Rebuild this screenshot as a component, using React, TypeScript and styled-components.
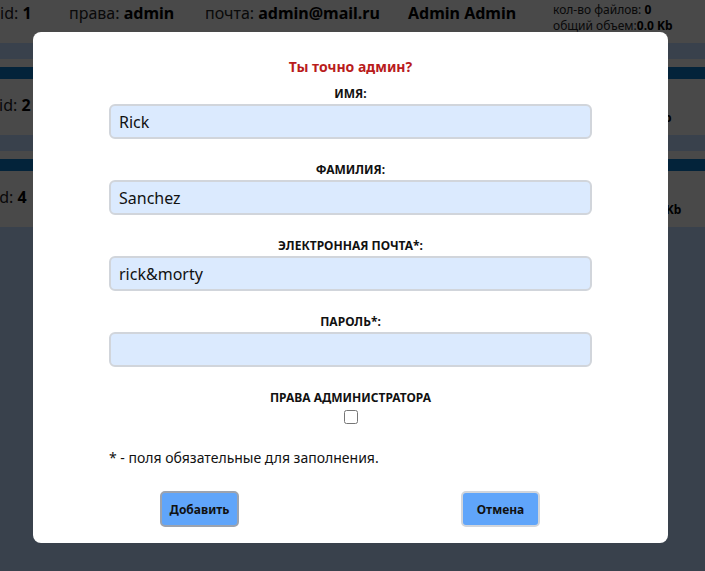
import React from "react";
import styled, { createGlobalStyle } from "styled-components";

const GlobalStyle = createGlobalStyle`
  html, body {
    margin: 0;
    padding: 0;
    height: 100%;
    overflow: hidden;
  }

  body {
    font-family: "Noto Sans", "Open Sans", sans-serif;
    background: #bfdbfe;
    color: #111;
  }
`;

const Page = styled.div`
  position: relative;
  height: 571px;
  background: #bfdbfe;
  overflow: hidden;
`;

const UserList = styled.div`
  display: flex;
  flex-direction: column;
  gap: 16px;
  margin-top: -33px;
`;

const UserCard = styled.div`
  display: flex;
  flex-direction: column;
  height: 76px;
  padding-top: 8px;
  box-sizing: border-box;
  background: #f3f4f6;
`;

const Stripe = styled.div`
  height: 12px;
  background: #0d75c1;
`;

const UserRow = styled.div<{ $shift: number }>`
  flex: 1;
  display: flex;
  align-items: center;
  margin-left: ${(p) => p.$shift}px;
  font-size: 16px;
  color: #222;

  b {
    color: #000;
  }
`;

const Cell = styled.div<{ $w: number }>`
  width: ${(p) => p.$w}px;
  flex-shrink: 0;
  white-space: nowrap;
  margin-top: -4px;
`;

const Stats = styled.div`
  display: flex;
  flex-direction: column;
  font-size: 12px;
  line-height: 16px;
  white-space: nowrap;
  margin-top: 6px;
`;

const Overlay = styled.div`
  position: absolute;
  inset: 0;
  background: rgba(0, 0, 0, 0.7);
  display: flex;
  justify-content: center;
  align-items: flex-start;
  padding: 32px 4px 0 0;
`;

const Modal = styled.div`
  width: 635px;
  box-sizing: border-box;
  background: #fff;
  border-radius: 8px;
  padding: 25px 76px 16px;
  display: flex;
  flex-direction: column;
`;

const Title = styled.div`
  text-align: center;
  color: #b91c1c;
  font-weight: 700;
  font-size: 14px;
  line-height: 20px;
  margin-bottom: 9px;
`;

const Field = styled.div`
  display: flex;
  flex-direction: column;
  gap: 2px;
  margin-bottom: 23px;
`;

const Label = styled.label`
  text-align: center;
  font-weight: 700;
  font-size: 12px;
  line-height: 16px;
  color: #111;
  text-transform: uppercase;
`;

const Input = styled.input`
  height: 35px;
  box-sizing: border-box;
  border: 2px solid #d1d5db;
  border-radius: 6px;
  background: #dbeafe;
  padding: 0 8px;
  font-family: inherit;
  font-size: 16px;
  color: #111;
  outline: none;
`;

const CheckField = styled.div`
  display: flex;
  flex-direction: column;
  align-items: center;
  gap: 4px;
  margin-bottom: 24px;
`;

const Checkbox = styled.input`
  width: 14px;
  height: 14px;
  margin: 0;
`;

const Note = styled.div`
  font-size: 14px;
  line-height: 20px;
  color: #111;
  margin-bottom: 23px;
`;

const Actions = styled.div`
  display: flex;
  justify-content: space-between;
  padding: 0 52px 0 51px;
`;

const Button = styled.button<{ $focused?: boolean }>`
  width: 79px;
  height: 36px;
  box-sizing: border-box;
  border: 2px solid ${(p) => (p.$focused ? "#9ca3af" : "#d1d5db")};
  border-radius: 5px;
  background: #60a5fa;
  font-family: inherit;
  font-weight: 700;
  font-size: 12px;
  color: #111;
  cursor: pointer;
`;

const users = [
  { id: 1, role: "admin", mail: "admin@mail.ru", name: "Admin Admin", files: 0, size: "0.0 Kb", shift: 0 },
  { id: 2, role: "user", mail: "user@mail.ru", name: "User User", files: 0, size: "0.0 Kb", shift: -1 },
  { id: 4, role: "user", mail: "rick@mail.ru", name: "Rick Sanchez", files: 1, size: "240.6 Kb", shift: -5 },
];

export default function App() {
  return (
    <>
      <GlobalStyle />
      <Page>
        <UserList>
          {users.map((u) => (
            <UserCard key={u.id}>
              <Stripe />
              <UserRow $shift={u.shift}>
                <Cell $w={69}>id: <b>{u.id}</b></Cell>
                <Cell $w={136}>права: <b>{u.role}</b></Cell>
                <Cell $w={203}>почта: <b>{u.mail}</b></Cell>
                <Cell $w={145}><b>{u.name}</b></Cell>
                <Stats>
                  <span>кол-во файлов: <b>{u.files}</b></span>
                  <span>общий объем:<b>{u.size}</b></span>
                </Stats>
              </UserRow>
            </UserCard>
          ))}
        </UserList>
        <Overlay>
          <Modal>
            <Title>Ты точно админ?</Title>
            <Field>
              <Label>Имя:</Label>
              <Input defaultValue="Rick" />
            </Field>
            <Field>
              <Label>Фамилия:</Label>
              <Input defaultValue="Sanchez" />
            </Field>
            <Field>
              <Label>Электронная почта*:</Label>
              <Input defaultValue="rick&morty" />
            </Field>
            <Field>
              <Label>Пароль*:</Label>
              <Input type="password" />
            </Field>
            <CheckField>
              <Label>Права администратора</Label>
              <Checkbox type="checkbox" />
            </CheckField>
            <Note>* - поля обязательные для заполнения.</Note>
            <Actions>
              <Button $focused>Добавить</Button>
              <Button>Отмена</Button>
            </Actions>
          </Modal>
        </Overlay>
      </Page>
    </>
  );
}
